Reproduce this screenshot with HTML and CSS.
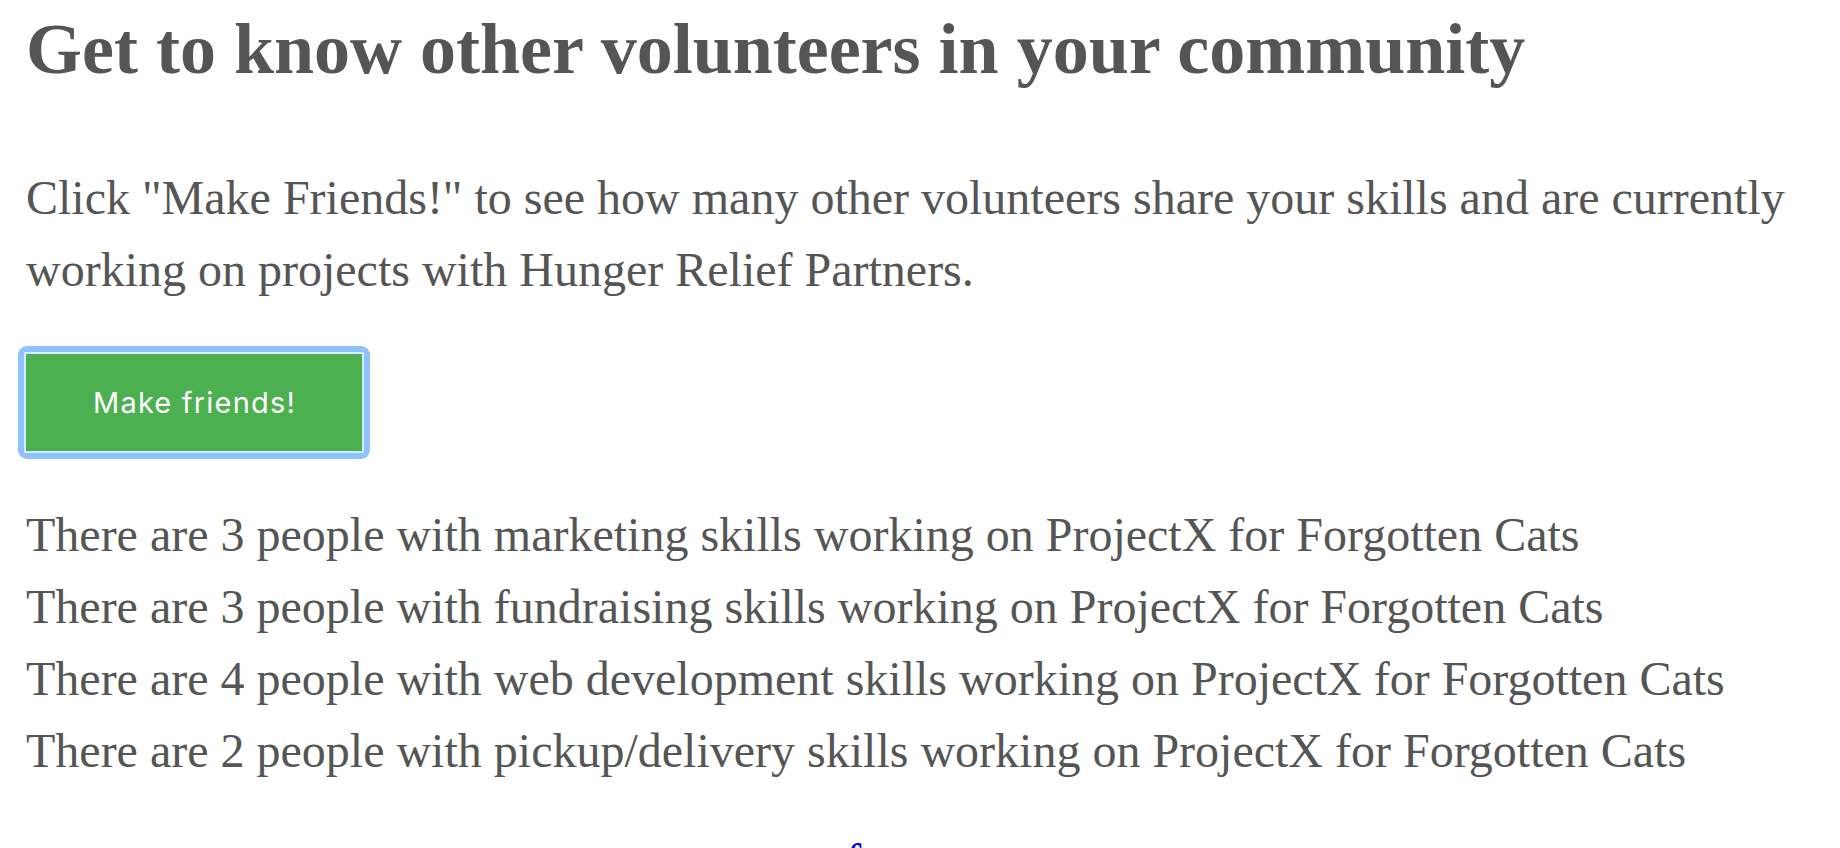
FILE: index.html
```html
<!DOCTYPE html>
<html lang="en">
<head>
<meta charset="utf-8">
<title>Make friends</title>
<link rel="stylesheet" href="styles.css">
</head>
<body>
<main class="page">
  <h1 class="title">Get to know other volunteers in your community</h1>
  <p class="intro">Click "Make Friends!" to see how many other volunteers share your skills and are currently working on projects with Hunger Relief Partners.</p>
  <div class="actions">
    <span class="focus-ring"><button class="btn" type="button">Make friends!</button></span>
  </div>
  <div class="results">
    <div class="result">There are 3 people with marketing skills working on ProjectX for Forgotten Cats</div>
    <div class="result">There are 3 people with fundraising skills working on ProjectX for Forgotten Cats</div>
    <div class="result">There are 4 people with web development skills working on ProjectX for Forgotten Cats</div>
    <div class="result">There are 2 people with pickup/delivery skills working on ProjectX for Forgotten Cats</div>
  </div>
  <p class="more"><a class="more-link" href="#">a few more</a></p>
</main>
</body>
</html>
```

FILE: styles.css
```css
html, body {
  margin: 0;
  padding: 0;
  background: #ffffff;
}

body {
  font-family: "Liberation Serif", "Times New Roman", serif;
  color: #555555;
}

.page {
  padding: 0 26px;
}

.title {
  margin: 6px 0 0;
  font-size: 72px;
  line-height: 86px;
  font-weight: bold;
}

.intro {
  margin: 70px 0 0;
  font-size: 48px;
  line-height: 72px;
}

.actions {
  margin-top: 40px;
  display: flex;
}

.focus-ring {
  display: inline-flex;
  margin-left: -8px;
  padding: 6px;
  border-radius: 9px;
  background: #8ec2fb;
}

.btn {
  margin: 0;
  padding: 31px 66px 31px 67px;
  border: 2px solid #dbeafc;
  background: #4caf50;
  color: #ffffff;
  font-family: Inter, "Noto Sans", sans-serif;
  font-size: 29px;
  line-height: 35px;
  letter-spacing: 1.2px;
  font-weight: 400;
  cursor: pointer;
  outline: none;
}

.results {
  margin-top: 40px;
  font-size: 48px;
  line-height: 72px;
}

.more {
  margin: 38px 0 0;
  text-align: center;
  font-size: 48px;
  line-height: 72px;
}

.more-link {
  color: #0000ee;
}
```
